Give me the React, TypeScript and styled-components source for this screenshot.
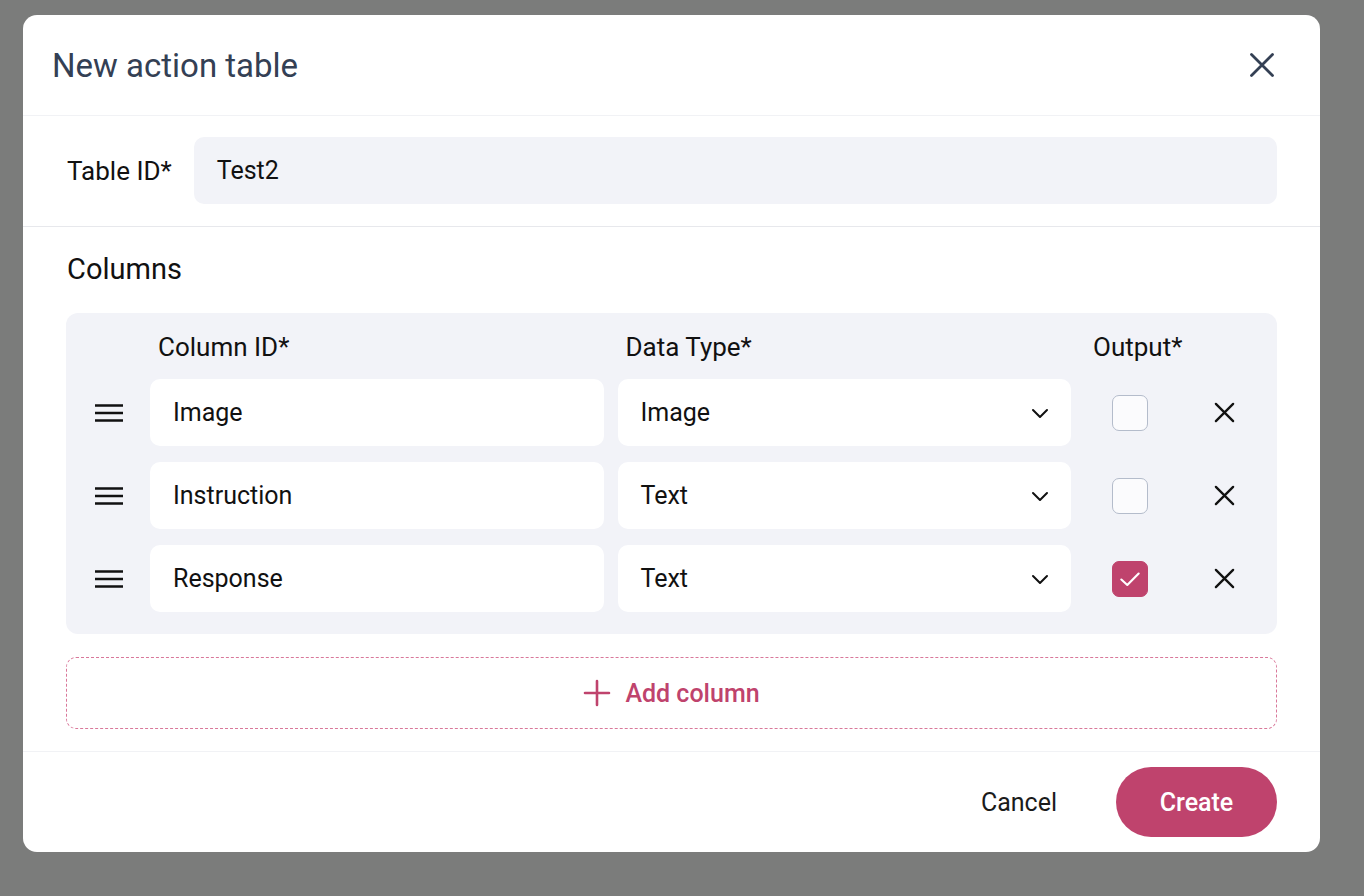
import { Fragment } from "react";
import styled, { createGlobalStyle } from "styled-components";

const GlobalStyle = createGlobalStyle`
    html, body {
        margin: 0;
        padding: 0;
        background: #7b7c7b;
        font-family: Roboto, "Noto Sans", sans-serif;
    }
    * { box-sizing: border-box; }
`;

const Page = styled.div`
    width: 1364px;
    height: 896px;
    padding: 15px 0 0 23px;
`;

const Dialog = styled.div`
    width: 1297px;
    height: 837px;
    background: #ffffff;
    border-radius: 14px;
    display: flex;
    flex-direction: column;
    overflow: hidden;
`;

const Header = styled.div`
    height: 101px;
    display: flex;
    align-items: center;
    justify-content: space-between;
    padding: 0 44px 0 29px;
    border-bottom: 1px solid #f1f2f5;
`;

const Title = styled.h1`
    margin: 0;
    font-size: 33px;
    font-weight: 400;
    color: #344054;
`;

const IconButton = styled.button`
    border: none;
    background: none;
    padding: 0;
    display: flex;
    align-items: center;
    justify-content: center;
    cursor: pointer;
`;

const IdSection = styled.div`
    display: flex;
    align-items: center;
    gap: 22px;
    padding: 21px 43px 22px 44px;
    border-bottom: 1px solid #e7e8ec;
`;

const Label = styled.label`
    font-size: 26px;
    font-weight: 400;
    color: #111;
    white-space: nowrap;
`;

const TextField = styled.div<{ $bg?: string }>`
    flex: 1;
    height: 67px;
    display: flex;
    align-items: center;
    justify-content: space-between;
    padding: 0 22px 0 23px;
    border-radius: 10px;
    background: ${(p) => p.$bg ?? "#ffffff"};
    font-size: 25px;
    color: #111;
`;

const ColumnsSection = styled.div`
    padding: 25px 43px 22px 43px;
    display: flex;
    flex-direction: column;
    border-bottom: 1px solid #f1f2f5;
`;

const SectionTitle = styled.h2`
    margin: 0 0 27px 1px;
    font-size: 29px;
    font-weight: 400;
    color: #111;
`;

const TableBox = styled.div`
    background: #f2f3f8;
    border-radius: 12px;
    padding: 0 18px 22px 0;
    display: grid;
    grid-template-columns: 70px 1fr 1fr 90px 70px;
    column-gap: 14px;
    row-gap: 16px;
    align-items: center;
`;

const HeadCell = styled.div`
    height: 50px;
    padding: 18px 0 0 8px;
    display: flex;
    align-items: center;
    font-size: 26px;
    font-weight: 400;
    color: #111;
    white-space: nowrap;
`;

const HandleCell = styled.div`
    display: flex;
    justify-content: flex-end;
    padding-right: 12px;
`;

const CenterCell = styled.div`
    display: flex;
    justify-content: center;
    align-items: center;
`;

const Checkbox = styled.div<{ $checked: boolean }>`
    width: 36px;
    height: 36px;
    border-radius: 7px;
    border: 1px solid ${(p) => (p.$checked ? "#bf436d" : "#b4bccb")};
    background: ${(p) => (p.$checked ? "#bf436d" : "#fbfbfd")};
    display: flex;
    align-items: center;
    justify-content: center;
`;

const AddButton = styled.button`
    margin-top: 23px;
    height: 72px;
    width: 100%;
    border: 1px dashed #d9789a;
    border-radius: 10px;
    background: #fff;
    display: flex;
    align-items: center;
    justify-content: center;
    gap: 14px;
    font-family: inherit;
    font-size: 25px;
    font-weight: 500;
    color: #bf436d;
    cursor: pointer;
`;

const Footer = styled.div`
    flex: 1;
    display: flex;
    align-items: center;
    justify-content: flex-end;
    gap: 22px;
    padding: 0 43px 0 0;
`;

const CancelButton = styled.button`
    border: none;
    background: none;
    font-family: inherit;
    font-size: 25px;
    color: #1b1b1b;
    padding: 0 37px 0 35px;
    height: 70px;
    cursor: pointer;
`;

const CreateButton = styled.button`
    border: none;
    background: #bf436d;
    color: #fff;
    font-family: inherit;
    font-size: 25px;
    font-weight: 500;
    width: 161px;
    height: 70px;
    border-radius: 35px;
    cursor: pointer;
`;

const CloseIcon = ({ size, color, width }: { size: number; color: string; width: number }) => (
    <svg width={size} height={size} viewBox="0 0 24 24" fill="none" stroke={color} strokeWidth={width} strokeLinecap="round">
        <path d="M3 3 L21 21 M21 3 L3 21" />
    </svg>
);

const HandleIcon = () => (
    <svg width="30" height="20" viewBox="0 0 30 20" fill="none" stroke="#111" strokeWidth="2.4">
        <path d="M1 2.5 H29 M1 10 H29 M1 17.5 H29" />
    </svg>
);

const ChevronIcon = () => (
    <svg width="18" height="12" viewBox="0 0 18 12" fill="none" stroke="#111" strokeWidth="2" strokeLinecap="round" strokeLinejoin="round">
        <path d="M2 3 L9 10 L16 3" />
    </svg>
);

const CheckIcon = () => (
    <svg width="26" height="26" viewBox="0 0 24 24" fill="none" stroke="#fff" strokeWidth="2" strokeLinecap="round" strokeLinejoin="round">
        <path d="M4 12.5 L9.5 17.5 L20 7" />
    </svg>
);

const PlusIcon = () => (
    <svg width="28" height="28" viewBox="0 0 28 28" fill="none" stroke="#bf436d" strokeWidth="2.6" strokeLinecap="round">
        <path d="M14 2 V26 M2 14 H26" />
    </svg>
);

interface Column {
    id: string
    type: string
    output: boolean
}

const columns: Column[] = [
    { id: "Image", type: "Image", output: false },
    { id: "Instruction", type: "Text", output: false },
    { id: "Response", type: "Text", output: true },
];

export default function App() {
    return (
        <Page>
            <GlobalStyle />
            <Dialog>
                <Header>
                    <Title>New action table</Title>
                    <IconButton>
                        <CloseIcon size={28} color="#344054" width={2.4} />
                    </IconButton>
                </Header>

                <IdSection>
                    <Label>Table ID*</Label>
                    <TextField $bg="#f2f3f8">Test2</TextField>
                </IdSection>

                <ColumnsSection>
                    <SectionTitle>Columns</SectionTitle>
                    <TableBox>
                        <div />
                        <HeadCell>Column ID*</HeadCell>
                        <HeadCell>Data Type*</HeadCell>
                        <HeadCell>Output*</HeadCell>
                        <div />

                        {columns.map((c) => (
                            <Fragment key={c.id}>
                                <HandleCell>
                                    <HandleIcon />
                                </HandleCell>
                                <TextField>{c.id}</TextField>
                                <TextField>
                                    {c.type}
                                    <ChevronIcon />
                                </TextField>
                                <CenterCell>
                                    <Checkbox $checked={c.output}>
                                        {c.output && <CheckIcon />}
                                    </Checkbox>
                                </CenterCell>
                                <CenterCell>
                                    <CloseIcon size={23} color="#111" width={2.4} />
                                </CenterCell>
                            </Fragment>
                        ))}
                    </TableBox>

                    <AddButton>
                        <PlusIcon />
                        Add column
                    </AddButton>
                </ColumnsSection>

                <Footer>
                    <CancelButton>Cancel</CancelButton>
                    <CreateButton>Create</CreateButton>
                </Footer>
            </Dialog>
        </Page>
    );
}
